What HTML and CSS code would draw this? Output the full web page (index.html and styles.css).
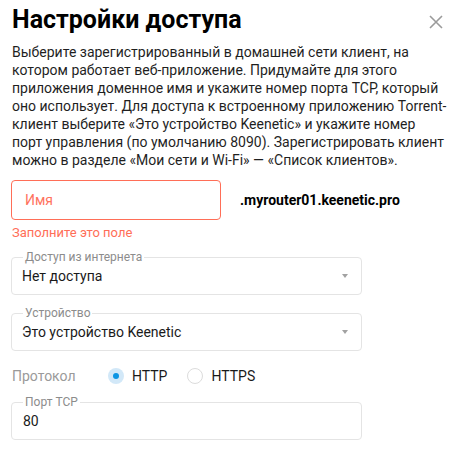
FILE: index.html
```html
<!DOCTYPE html>
<html lang="ru">
<head>
<meta charset="utf-8">
<link rel="stylesheet" href="styles.css">
</head>
<body>
<div class="dialog">
  <div class="header">
    <h1 class="title">Настройки доступа</h1>
    <button class="close" aria-label="Закрыть">
      <svg width="14" height="14" viewBox="0 0 14 14"><path d="M1 1L13 13M13 1L1 13" stroke="#9b9b9b" stroke-width="1.6" fill="none"/></svg>
    </button>
  </div>
  <p class="desc">Выберите зарегистрированный в домашней сети клиент, на<br>котором работает веб-приложение. Придумайте для этого<br>приложения доменное имя и укажите номер порта TCP, который<br>оно использует. Для доступа к встроенному приложению Torrent-<br>клиент выберите «Это устройство Keenetic» и укажите номер<br>порт управления (по умолчанию 8090). Зарегистрировать клиент<br>можно в разделе «Мои сети и Wi-Fi» — «Список клиентов».</p>

  <div class="name-row">
    <div class="name-input">Имя</div>
    <div class="domain">.myrouter01.keenetic.pro</div>
  </div>
  <div class="error">Заполните это поле</div>

  <fieldset class="field select">
    <legend>Доступ из интернета</legend>
    <span class="value">Нет доступа</span>
    <span class="arrow"></span>
  </fieldset>

  <fieldset class="field select second">
    <legend>Устройство</legend>
    <span class="value">Это устройство Keenetic</span>
    <span class="arrow"></span>
  </fieldset>

  <div class="proto-row">
    <span class="proto-label">Протокол</span>
    <span class="radio checked"></span><span class="radio-text">HTTP</span>
    <span class="radio"></span><span class="radio-text">HTTPS</span>
  </div>

  <fieldset class="field port">
    <legend>Порт TCP</legend>
    <span class="value">80</span>
  </fieldset>
</div>
</body>
</html>
```

FILE: styles.css
```css
* { box-sizing: border-box; }
html, body { margin: 0; padding: 0; background: #fff; overflow: hidden; }
body { font-family: Roboto, "Noto Sans", sans-serif; color: #1a1a1a; }
.dialog { padding: 4px 0 0 12px; width: 454px; }
.header { display: flex; justify-content: space-between; align-items: flex-start; }
.title { margin: 0; font-size: 25px; line-height: 32px; font-weight: 700; color: #000; }
.close { background: none; border: 0; padding: 0; margin: 11px 11px 0 0; width: 14px; height: 14px; display: flex; }
.desc { margin: 7px 0 0; font-size: 14px; line-height: 18px; color: #1f1f1f; white-space: nowrap; }
.name-row { display: flex; align-items: center; margin-top: 11px; margin-left: -1px; }
.name-input { width: 210px; height: 40px; border: 1px solid #ff6e57; border-radius: 4px; padding-left: 13px; display: flex; align-items: center; font-size: 14px; color: #ff735e; }
.domain { margin-left: 19px; font-size: 14px; font-weight: 700; color: #000; }
.error { margin-top: 5px; font-size: 13px; line-height: 16px; color: #ff6e57; }
.field { margin: 0 0 0 -1px; width: 351px; border: 1px solid #e4e4e4; border-radius: 4px; padding: 0 10px 0 10px; height: 44px; display: flex; align-items: center; position: relative; }
.field legend { font-size: 12px; line-height: 12px; color: #8c8c8c; padding: 0 2px; margin-left: 1px; }
.field .value { font-size: 14px; color: #1a1a1a; margin-top: -6px; flex: 1; }
.select { margin-top: 10px; }
.select.second { margin-top: 12px; }
.arrow { width: 0; height: 0; border-left: 3.5px solid transparent; border-right: 3.5px solid transparent; border-top: 4px solid #a2a2a2; margin-right: 3px; margin-top: -6px; }
.proto-row { display: flex; align-items: center; height: 20px; margin-top: 15px; font-size: 14px; }
.proto-label { color: #9a9a9a; width: 96px; }
.radio { width: 16px; height: 16px; border-radius: 50%; border: 1px solid #dcdcdc; display: inline-flex; align-items: center; justify-content: center; }
.radio.checked { border: 0; background: #d2e8f8; }
.radio.checked::after { content: ""; width: 6px; height: 6px; border-radius: 50%; background: #0c95e3; }
.radio-text { color: #1a1a1a; margin-left: 8px; margin-right: 20px; }
.port { margin-top: 10px; }
.port .value { margin-left: 1px; }
```
